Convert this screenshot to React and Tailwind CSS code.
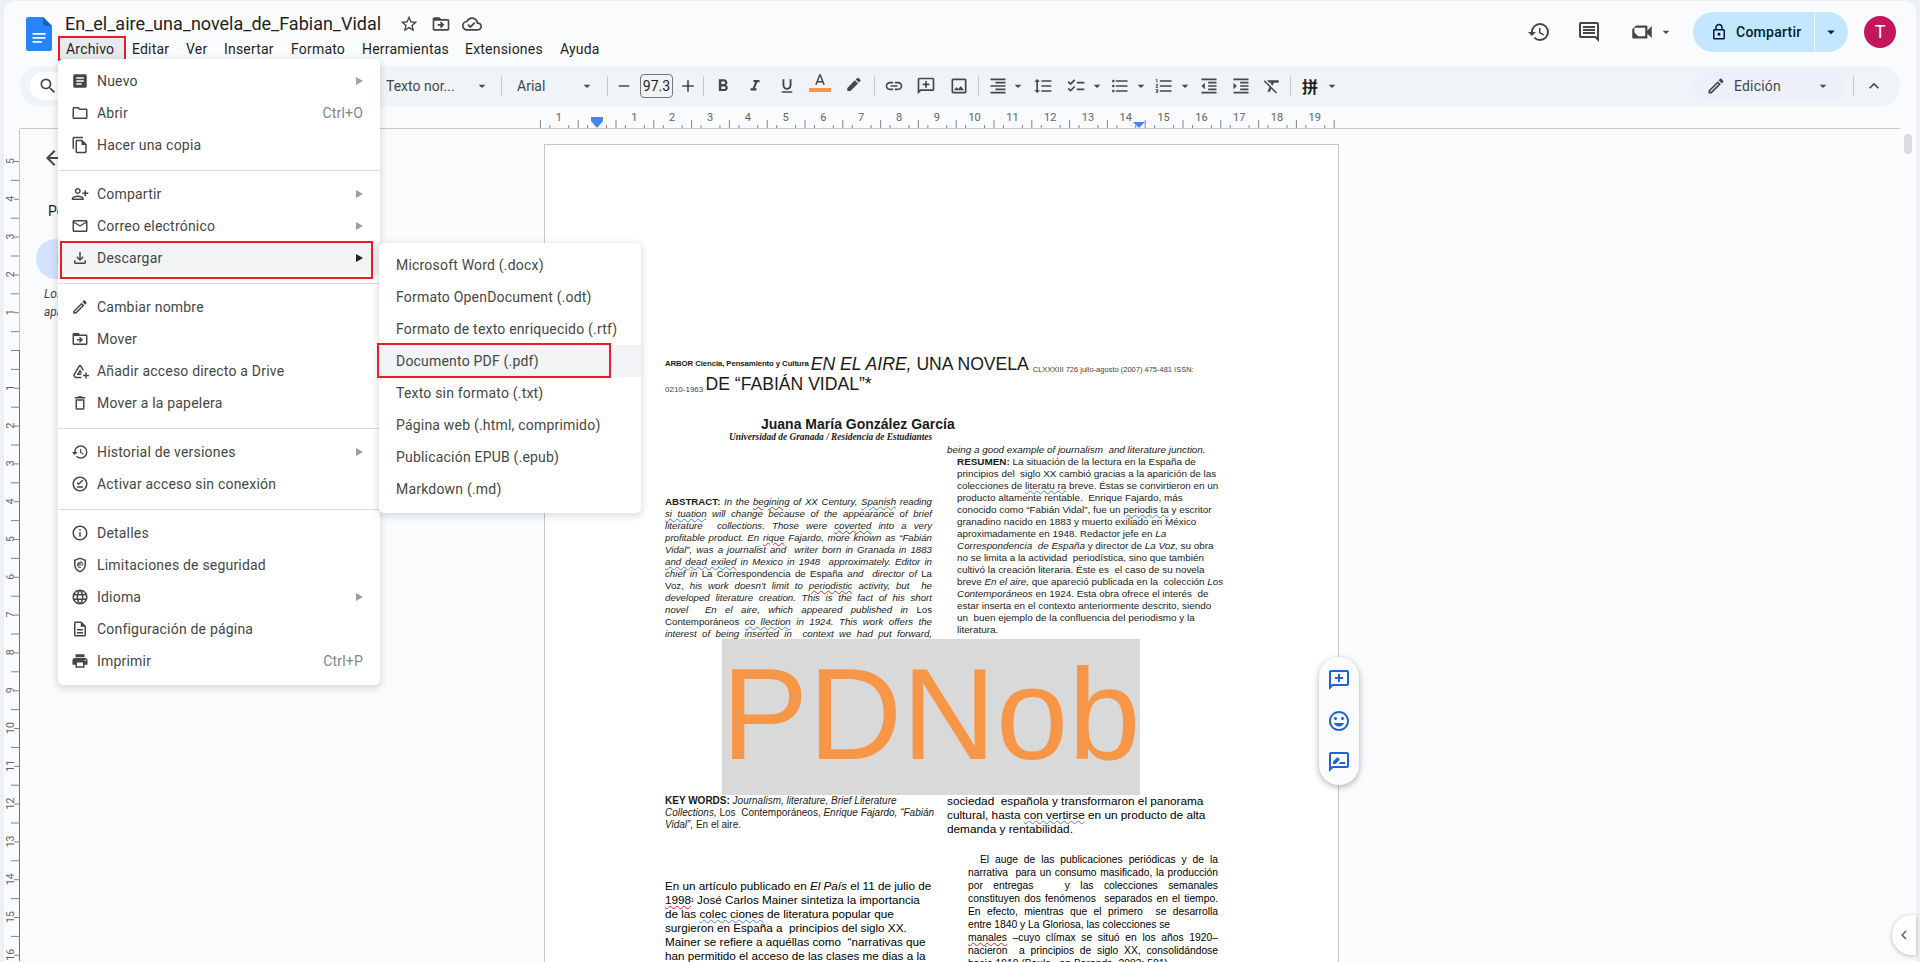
const P = {
  star: "M22 9.24l-7.19-.62L12 2 9.19 8.63 2 9.24l5.46 4.73L5.82 21 12 17.27 18.18 21l-1.63-7.03L22 9.24zM12 15.4l-3.76 2.27 1-4.28-3.32-2.88 4.38-.38L12 6.1l1.71 4.04 4.38.38-3.32 2.88 1 4.28L12 15.4z",
  move: "M20 6h-8l-2-2H4c-1.1 0-2 .9-2 2v12c0 1.1.9 2 2 2h16c1.1 0 2-.9 2-2V8c0-1.1-.9-2-2-2zm0 12H4V8h16v10zm-8.01-9l-1.41 1.41L12.16 12H8v2h4.16l-1.59 1.59L11.99 17 16 13.01 11.99 9z",
  cloud: "M19.35 10.04C18.67 6.59 15.64 4 12 4 9.11 4 6.6 5.64 5.35 8.04 2.34 8.36 0 10.91 0 14c0 3.31 2.69 6 6 6h13c2.76 0 5-2.24 5-5 0-2.64-2.05-4.78-4.65-4.96zM19 18H6c-2.21 0-4-1.79-4-4 0-2.05 1.53-3.76 3.56-3.97l1.07-.11.5-.95C8.08 7.14 9.94 6 12 6c2.62 0 4.88 1.86 5.39 4.43l.3 1.5 1.53.11c1.56.1 2.78 1.41 2.78 2.96 0 1.65-1.35 3-3 3zm-9-3.82l-2.09-2.09L6.5 13.5 10 17l6.01-6.01-1.41-1.41z",
  history: "M13 3a9 9 0 0 0-9 9H1l3.89 3.89.07.14L9 12H6c0-3.87 3.13-7 7-7s7 3.13 7 7-3.13 7-7 7c-1.93 0-3.68-.79-4.94-2.06l-1.42 1.42A8.954 8.954 0 0 0 13 21a9 9 0 0 0 0-18zm-1 5v5l4.28 2.54.72-1.21-3.5-2.08V8H12z",
  comment: "M21.99 4c0-1.1-.89-2-1.99-2H4c-1.1 0-2 .9-2 2v12c0 1.1.9 2 2 2h14l4 4-.01-18zM20 4v13.17L18.83 16H4V4h16zM6 12h12v2H6zm0-3h12v2H6zm0-3h12v2H6z",
  video: "M15 8v8H8.5L5 12.5V8h10m1-2H6.5L3 9.5V17c0 .55.45 1 1 1h12c.55 0 1-.45 1-1v-3.5l4 4v-11l-4 4V7c0-.55-.45-1-1-1z",
  lock: "M18 8h-1V6c0-2.76-2.24-5-5-5S7 3.24 7 6v2H6c-1.1 0-2 .9-2 2v10c0 1.1.9 2 2 2h12c1.1 0 2-.9 2-2V10c0-1.1-.9-2-2-2zM9 6c0-1.66 1.34-3 3-3s3 1.34 3 3v2H9V6zm9 14H6V10h12v10zm-6-3c1.1 0 2-.9 2-2s-.9-2-2-2-2 .9-2 2 .9 2 2 2z",
  edit: "M14.06 9.02l.92.92L5.92 19H5v-.92l9.06-9.06M17.66 3c-.25 0-.51.1-.7.29l-1.83 1.83 3.75 3.75 1.83-1.83c.39-.39.39-1.02 0-1.41l-2.34-2.34c-.2-.2-.45-.29-.71-.29zm-3.6 3.19L3 17.25V21h3.75L17.81 9.94l-3.75-3.75z",
  search: "M15.5 14h-.79l-.28-.27A6.471 6.471 0 0 0 16 9.5 6.5 6.5 0 1 0 9.5 16c1.61 0 3.09-.59 4.23-1.57l.27.28v.79l5 4.99L20.49 19l-4.99-5zm-6 0C7.01 14 5 11.99 5 9.5S7.01 5 9.5 5 14 7.01 14 9.5 11.99 14 9.5 14z",
  article: "M19 3H5c-1.1 0-2 .9-2 2v14c0 1.1.9 2 2 2h14c1.1 0 2-.9 2-2V5c0-1.1-.9-2-2-2zm-5 14H7v-2h7v2zm3-4H7v-2h10v2zm0-4H7V7h10v2z",
  folder: "M9.17 6l2 2H20v10H4V6h5.17M10 4H4c-1.1 0-1.99.9-1.99 2L2 18c0 1.1.9 2 2 2h16c1.1 0 2-.9 2-2V8c0-1.1-.9-2-2-2h-8l-2-2z",
  copy: "M16 1H4c-1.1 0-2 .9-2 2v14h2V3h12V1zm-1 4H8c-1.1 0-1.99.9-1.99 2L6 21c0 1.1.89 2 1.99 2H19c1.1 0 2-.9 2-2V11l-6-6zM8 21V7h6v5h5v9H8z",
  person: "M15 12c2.21 0 4-1.79 4-4s-1.79-4-4-4-4 1.79-4 4 1.79 4 4 4zm0-6c1.1 0 2 .9 2 2s-.9 2-2 2-2-.9-2-2 .9-2 2-2zm0 8c-2.67 0-8 1.34-8 4v2h16v-2c0-2.66-5.33-4-8-4zm-6 4c.22-.72 3.31-2 6-2 2.7 0 5.8 1.29 6 2H9zm-3-3v-3h3v-2H6V7H4v3H1v2h3v3h2z",
  mail: "M22 6c0-1.1-.9-2-2-2H4c-1.1 0-2 .9-2 2v12c0 1.1.9 2 2 2h16c1.1 0 2-.9 2-2V6zm-2 0l-8 5-8-5h16zm0 12H4V8l8 5 8-5v10z",
  download: "M18 15v3H6v-3H4v3c0 1.1.9 2 2 2h12c1.1 0 2-.9 2-2v-3h-2zm-1-4l-1.41-1.41L13 12.17V4h-2v8.17L8.41 9.59 7 11l5 5 5-5z",
  trash: "M16 9v10H8V9h8m-1.5-6h-5l-1 1H5v2h14V4h-3.5l-1-1zM18 7H6v12c0 1.1.9 2 2 2h8c1.1 0 2-.9 2-2V7z",
  info: "M11 7h2v2h-2zm0 4h2v6h-2zm1-9C6.48 2 2 6.48 2 12s4.48 10 10 10 10-4.48 10-10S17.52 2 12 2zm0 18c-4.41 0-8-3.59-8-8s3.59-8 8-8 8 3.59 8 8-3.59 8-8 8z",
  globe: "M11.99 2C6.47 2 2 6.48 2 12s4.47 10 9.99 10C17.52 22 22 17.52 22 12S17.52 2 11.99 2zm6.93 6h-2.95a15.65 15.65 0 0 0-1.38-3.56A8.03 8.03 0 0 1 18.92 8zM12 4.04c.83 1.2 1.48 2.53 1.91 3.96h-3.82c.43-1.43 1.08-2.76 1.91-3.96zM4.26 14C4.1 13.36 4 12.69 4 12s.1-1.36.26-2h3.38c-.08.66-.14 1.32-.14 2s.06 1.34.14 2H4.26zm.82 2h2.95c.32 1.25.78 2.45 1.38 3.56A7.987 7.987 0 0 1 5.08 16zm2.95-8H5.08a7.987 7.987 0 0 1 4.33-3.56A15.65 15.65 0 0 0 8.03 8zM12 19.96c-.83-1.2-1.48-2.53-1.91-3.96h3.82c-.43 1.43-1.08 2.76-1.91 3.96zM14.34 14H9.66c-.09-.66-.16-1.32-.16-2s.07-1.35.16-2h4.68c.09.65.16 1.32.16 2s-.07 1.34-.16 2zm.25 5.56c.6-1.11 1.06-2.31 1.38-3.56h2.95a8.03 8.03 0 0 1-4.33 3.56zM16.36 14c.08-.66.14-1.32.14-2s-.06-1.34-.14-2h3.38c.16.64.26 1.31.26 2s-.1 1.36-.26 2h-3.38z",
  page: "M8 16h8v2H8zm0-4h8v2H8zm6-10H6c-1.1 0-2 .9-2 2v16c0 1.1.89 2 1.99 2H18c1.1 0 2-.9 2-2V8l-6-6zm4 18H6V4h7v5h5v11z",
  print: "M19 8H5c-1.66 0-3 1.34-3 3v6h4v4h12v-4h4v-6c0-1.66-1.34-3-3-3zm-3 11H8v-5h8v5zm3-7c-.55 0-1-.45-1-1s.45-1 1-1 1 .45 1 1-.45 1-1 1zm-1-9H6v4h12V3z",
  drive: "M12 3.5c-.7 0-1.3.4-1.7 1L3.2 16.6c-.4.6-.4 1.4 0 2l1.3 2.2c.3.6 1 1 1.7 1H14v-2H6.2l-1.3-2.2L12 5.5l3.6 6.2 1.7-1-3.6-6.2c-.4-.6-1-1-1.7-1zm0 6l-4.5 7.7h6.5v-2H11l1-1.8 1 1.7 1.7-1zM19 14v3h-3v2h3v3h2v-3h3v-2h-3v-3z",
  offline: "M12 2C6.48 2 2 6.48 2 12s4.48 10 10 10 10-4.48 10-10S17.52 2 12 2zm0 18c-4.41 0-8-3.59-8-8s3.59-8 8-8 8 3.59 8 8-3.59 8-8 8zm-4-3h8v-2H8zm2.3-3.3L7.4 10.8l1.4-1.4 1.5 1.5 4.9-4.9 1.4 1.4z",
  shield: "M12 2L4 5v6.1c0 5 3.4 9.7 8 10.9 4.6-1.2 8-5.9 8-10.9V5zm6 9.1c0 4-2.6 7.8-6 8.9-3.4-1.1-6-4.9-6-8.9V6.3l6-2.2 6 2.2zM12 7.5c-2.3 0-4 1.9-4 4.3s1.8 4.2 4.2 4.2h1.3v-1.2h-1.3c-1.7 0-3-1.3-3-3s1.2-3.1 2.8-3.1 2.8 1.2 2.8 2.7v.5c0 .4-.3.8-.7.8s-.6-.4-.6-.8v-.5c0-1.1-.9-2-2-2s-2 .9-2 2 .9 2 2 2c.5 0 1-.2 1.4-.6.3.4.8.6 1.2.6 1.1 0 1.9-.9 1.9-2v-.5c0-2.2-1.8-3.9-4-3.9zm0 5c-.5 0-.9-.4-.9-.8s.4-.9.9-.9.8.4.8.9-.3.8-.8.8z",
  bold: "M15.6 10.79c.97-.67 1.65-1.77 1.65-2.79 0-2.26-1.75-4-4-4H7v14h7.04c2.09 0 3.71-1.7 3.71-3.79 0-1.52-.86-2.82-2.15-3.42zM10 6.5h3c.83 0 1.5.67 1.5 1.5s-.67 1.5-1.5 1.5h-3v-3zm3.5 9H10v-3h3.5c.83 0 1.5.67 1.5 1.5s-.67 1.5-1.5 1.5z",
  italic: "M10 4v3h2.21l-3.42 8H6v3h8v-3h-2.21l3.42-8H18V4z",
  underline: "M12 17c3.31 0 6-2.69 6-6V3h-2.5v8c0 1.93-1.57 3.5-3.5 3.5S8.5 12.93 8.5 11V3H6v8c0 3.31 2.69 6 6 6zm-7 2v2h14v-2H5z",
  letterA: "M11 3L5.5 17h2.25l1.12-3h6.25l1.12 3h2.25L13 3h-2zm-1.38 9L12 5.67 14.38 12H9.62z",
  marker: "M13.06 5.19l3.75 3.75L7.75 18H4v-3.75l9.06-9.06zm4.82 2.68l-3.75-3.75 1.83-1.83c.39-.39 1.02-.39 1.41 0l2.34 2.34c.39.39.39 1.02 0 1.41l-1.83 1.83z",
  link: "M3.9 12c0-1.71 1.39-3.1 3.1-3.1h4V7H7c-2.76 0-5 2.24-5 5s2.24 5 5 5h4v-1.9H7c-1.71 0-3.1-1.39-3.1-3.1zM8 13h8v-2H8v2zm9-6h-4v1.9h4c1.71 0 3.1 1.39 3.1 3.1s-1.39 3.1-3.1 3.1h-4V17h4c2.76 0 5-2.24 5-5s-2.24-5-5-5z",
  addComment: "M22 4c0-1.1-.9-2-2-2H4c-1.1 0-2 .9-2 2v12c0 1.1.9 2 2 2h14l4 4V4zm-2 0v13.17L18.83 16H4V4h16zM13 6h-2v3H8v2h3v3h2v-3h3V9h-3z",
  image: "M19 5v14H5V5h14m0-2H5c-1.1 0-2 .9-2 2v14c0 1.1.9 2 2 2h14c1.1 0 2-.9 2-2V5c0-1.1-.9-2-2-2zm-4.86 8.86l-3 3.87L9 13.14 6 17h12l-3.86-5.14z",
  align: "M3 21h18v-2H3v2zm6-4h12v-2H9v2zm-6-4h18v-2H3v2zm6-4h12V7H9v2zM3 3v2h18V3H3z",
  spacing: "M6 7h2.5L5 3.5 1.5 7H4v10H1.5L5 20.5 8.5 17H6V7zm4-2v2h12V5H10zm0 14h12v-2H10v2zm0-6h12v-2H10v2z",
  checklist: "M22 7h-9v2h9V7zm0 8h-9v2h9v-2zM5.54 11L2 7.46l1.41-1.41 2.12 2.12 4.24-4.24 1.41 1.41L5.54 11zm0 8L2 15.46l1.41-1.41 2.12 2.12 4.24-4.24 1.41 1.41L5.54 19z",
  bullets: "M4 10.5c-.83 0-1.5.67-1.5 1.5s.67 1.5 1.5 1.5 1.5-.67 1.5-1.5-.67-1.5-1.5-1.5zm0-6c-.83 0-1.5.67-1.5 1.5S3.17 7.5 4 7.5 5.5 6.83 5.5 6 4.83 4.5 4 4.5zm0 12c-.83 0-1.5.68-1.5 1.5s.68 1.5 1.5 1.5 1.5-.68 1.5-1.5-.67-1.5-1.5-1.5zM7 19h14v-2H7v2zm0-6h14v-2H7v2zm0-8v2h14V5H7z",
  numbers: "M2 17h2v.5H3v1h1v.5H2v1h3v-4H2v1zm1-9h1V4H2v1h1v3zm-1 3h1.8L2 13.1v.9h3v-1H3.2L5 10.9V10H2v1zm5-6v2h14V5H7zm0 14h14v-2H7v2zm0-6h14v-2H7v2z",
  outdent: "M11 17h10v-2H11v2zm-8-5l4 4V8l-4 4zm0 9h18v-2H3v2zM3 3v2h18V3H3zm8 6h10V7H11v2zm0 4h10v-2H11v2z",
  indent: "M3 21h18v-2H3v2zM3 8v8l4-4-4-4zm8 9h10v-2H11v2zM3 3v2h18V3H3zm8 6h10V7H11v2zm0 4h10v-2H11v2z",
  clear: "M3.27 5L2 6.27l6.97 6.97L6.5 19h3l1.57-3.66L16.73 21 18 19.73 3.55 5.27 3.27 5zM6 5v.18L8.82 8h2.4l-.72 1.68 2.1 2.1L14.21 8H20V5H6z",
  mood: "M11.99 2C6.47 2 2 6.48 2 12s4.47 10 9.99 10C17.52 22 22 17.52 22 12S17.52 2 11.99 2zM12 20c-4.42 0-8-3.58-8-8s3.58-8 8-8 8 3.58 8 8-3.58 8-8 8zm3.5-9c.83 0 1.5-.67 1.5-1.5S16.33 8 15.5 8 14 8.67 14 9.5s.67 1.5 1.5 1.5zm-7 0c.83 0 1.5-.67 1.5-1.5S9.33 8 8.5 8 7 8.67 7 9.5 7.67 11 8.5 11zm3.5 6.5c2.33 0 4.31-1.46 5.11-3.5H6.89c.8 2.04 2.78 3.5 5.11 3.5z",
  suggest: "M20 2H4c-1.1 0-2 .9-2 2v18l4-4h14c1.1 0 2-.9 2-2V4c0-1.1-.9-2-2-2zm0 14H5.17L4 17.17V4h16v12zM11.5 14H18v-2h-4.5zM6 14h2.5l4.06-4.06a.5.5 0 0 0 0-.71L10.77 7.44a.5.5 0 0 0-.71 0L6 11.5z",
  back: "M20 11H7.83l5.59-5.59L12 4l-8 8 8 8 1.41-1.41L7.83 13H20v-2z",
  caret: "M7 10l5 5 5-5z",
  chevUp: "M7.41 15.41L12 10.83l4.59 4.58L18 14l-6-6-6 6z",
  chevLeft: "M15.41 7.41L14 6l-6 6 6 6 1.41-1.41L10.83 12z",
};

const Icon = ({ d, size = 20, className = "text-[#444746]" }) => (
  <svg width={size} height={size} viewBox="0 0 24 24" fill="currentColor" className={`shrink-0 ${className}`}>
    <path d={d} />
  </svg>
);

const Caret = ({ className = "" }) => <Icon d={P.caret} size={16} className={`text-[#444746] ${className}`} />;

const Sep = ({ className = "" }) => <div className={`w-px h-5 bg-[#c7c7c7] shrink-0 ${className}`} />;

// botón de la barra: ancho fijo con el icono centrado
const Tool = ({ d, w = "w-8", size = 20, flip = false, className = "" }) => (
  <div className={`${w} h-7 flex items-center justify-center shrink-0 ${className}`}>
    <Icon d={d} size={size} className={flip ? "text-[#444746] -scale-x-100" : "text-[#444746]"} />
  </div>
);

const Toolbar = () => (
  <div className="mx-4 h-10 rounded-full bg-[#f0f4f9] flex items-center font-[Roboto,sans-serif] text-sm text-[#444746]">
    <div className="ml-[10px] w-[220px] h-7 bg-white rounded-full flex items-center pl-2">
      <Icon d={P.search} size={20} />
    </div>
    <span className="ml-[136px] w-[88px] shrink-0 whitespace-nowrap">Texto nor...</span>
    <Caret />
    <Sep className="ml-[11px]" />
    <span className="ml-[15px] w-[62px] shrink-0">Arial</span>
    <Caret />
    <Sep className="ml-[12px]" />
    <Tool d="M19 13H5v-2h14v2z" w="w-[32px]" size={18} />
    <div className="w-[33px] h-6 rounded-[4px] border border-[#747775] flex items-center justify-center text-[14px] text-[#1f1f1f] shrink-0">97.3</div>
    <Tool d="M19 13h-6v6h-2v-6H5v-2h6V5h2v6h6v2z" w="w-[30px]" />
    <Sep />
    <Tool d={P.bold} className="ml-[3px]" />
    <Tool d={P.italic} size={18} />
    <Tool d={P.underline} size={18} />
    <div className="w-8 h-7 ml-px flex flex-col items-center justify-start shrink-0">
      <Icon d={P.letterA} size={18} className="text-[#444746] -mb-[1px]" />
      <div className="w-[22px] h-[4px] bg-[#f79646] -mt-[1px]" />
    </div>
    <Tool d={P.marker} size={20} className="ml-[2px]" />
    <Sep className="ml-[4px]" />
    <Tool d={P.link} className="ml-[3px]" />
    <Tool d={P.addComment} flip />
    <Tool d={P.image} className="ml-px" />
    <Sep className="ml-[3px]" />
    <Tool d={P.align} w="w-[28px]" className="ml-[5px]" />
    <Caret className="-ml-[2px]" />
    <Tool d={P.spacing} w="w-[28px]" className="ml-[3px]" />
    <Tool d={P.checklist} w="w-[28px]" className="ml-[5px]" />
    <Caret className="-ml-[1px]" />
    <Tool d={P.bullets} w="w-[28px]" className="ml-[1px]" />
    <Caret className="-ml-[1px]" />
    <Tool d={P.numbers} w="w-[28px]" className="ml-[1px]" />
    <Caret className="-ml-[1px]" />
    <Tool d={P.outdent} w="w-[28px]" className="ml-[2px]" />
    <Tool d={P.indent} w="w-[28px]" className="ml-[4px]" />
    <Tool d={P.clear} w="w-[28px]" className="ml-[3px]" />
    <Sep className="ml-[4px]" />
    <span className="ml-[11px] w-[20px] text-[16px] font-bold text-[#1f1f1f] font-['Noto_Sans_CJK_SC',sans-serif]">拼</span>
    <Caret className="ml-[2px]" />
    <div className="ml-[353px] w-[151px] h-7 rounded-full bg-[#edf0fb] flex items-center pl-[13px] shrink-0">
      <Icon d={P.edit} size={20} />
      <span className="ml-[8px] w-[81px] tracking-[0.2px]">Edición</span>
      <Caret />
    </div>
    <Sep className="ml-[9px]" />
    <Tool d={P.chevUp} w="w-[40px]" />
  </div>
);

const HRuler = () => {
  const ticks = [];
  for (let k = -6; k <= 78; k++) {
    const x = 596.6 + k * 9.45;
    if (k % 4 === 0) {
      if (k !== 0) ticks.push(<text key={k} x={x} y={15} textAnchor="middle" fontSize="11" fill="#5f6368" fontFamily="Roboto, sans-serif">{Math.abs(k / 4)}</text>);
    } else {
      const h = k % 2 === 0 ? 8 : 3;
      ticks.push(<rect key={k} x={x} y={22 - h} width="1" height={h} fill="#80868b" />);
    }
  }
  return (
    <div className="h-[23px] relative shrink-0">
      <svg width="1912" height="23" viewBox="4 0 1912 23" className="block">
        {ticks}
        <rect x="20" y="22" width="1880" height="1.5" fill="#c7c7c7" />
        <path d="M591 11h12v4h-12zM591 15h12l-6 7z" fill="#4285f4" />
        <path d="M1133 16h12l-6 6z" fill="#4285f4" />
      </svg>
    </div>
  );
};

const VRuler = () => {
  const marks = [];
  for (let k = -10; k <= 32; k++) {
    const y = 351 - 130 + k * 18.9;
    const numbered = k % 2 === 0 && k !== 0;
    if (numbered) {
      marks.push(<text key={k} x="0" y="0" transform={`translate(13.5 ${y}) rotate(-90)`} textAnchor="middle" fontSize="10.5" fill="#5f6368" fontFamily="Roboto, sans-serif">{Math.abs(k / 2)}</text>);
    }
    marks.push(<rect key={`t${k}`} x={numbered ? 14 : 11} y={y} width={numbered ? 5 : 8} height="1" fill="#80868b" />);
  }
  return (
    <svg width="16" height="832" viewBox="4 0 16 832" className="block shrink-0">
      {marks}
      <rect x="19" y="0" width="1" height="221" fill="#c7c7c7" />
      <rect x="19" y="221" width="1" height="611" fill="#70757a" />
    </svg>
  );
};

const R = ({ children }) => <span className="underline decoration-wavy decoration-[#e02020] decoration-1 underline-offset-1">{children}</span>;
const B = ({ children }) => <span className="underline decoration-wavy decoration-[#4a80e8] decoration-1 underline-offset-1">{children}</span>;

const J = ({ children, className = "h-3" }) => <p className={`${className} text-justify [text-align-last:justify] whitespace-pre-wrap`}>{children}</p>;
const L = ({ children, className = "" }) => <p className={`whitespace-pre ${className}`}>{children}</p>;

const Page = () => (
  <div className="relative w-[795px] h-[900px] shrink-0 bg-white border border-[#c7c7c7] overflow-hidden font-['Liberation_Sans',sans-serif] text-[#1a1a1a]">
    <div className="pt-[208px] pl-[120px]">
      <p className="h-[21px] leading-[21px] whitespace-pre text-[17.6px]">
        <span className="text-[7.8px] font-bold align-[4px] tracking-[-0.1px]">ARBOR Ciencia, Pensamiento y Cultura </span>
        <i>EN EL AIRE,</i> UNA NOVELA <span className="text-[7.5px] text-[#444] align-[-2px]">CLXXXIII 726 julio-agosto (2007) 475-481 ISSN:</span>
      </p>
      <p className="h-[21px] leading-[21px] whitespace-pre text-[17.6px]">
        <span className="text-[8px] text-[#444] align-[-2px]">0210-1963 </span>DE “FABIÁN VIDAL”*
      </p>
      <p className="mt-[22px] ml-[96px] text-[14px] leading-[14px] font-bold whitespace-pre">Juana María González García</p>
      <p className="ml-[64px] text-[9.4px] leading-[12px] font-bold italic whitespace-pre font-['Liberation_Serif',serif]">Universidad de Granada / Residencia de Estudiantes</p>
    </div>
    <div className="flex pl-[120px] mt-px">
      <div className="w-[267px] shrink-0 pt-[52px] text-[9.7px] leading-[12px] italic">
        <J><b className="not-italic">ABSTRACT:</b> In the <R>begining</R> of XX Century, <B>Spanish</B> reading</J>
        <J><B>si tuation</B> will change because of the appearance of brief</J>
        <J>literature  collections. Those were <R>coverted</R> into a very</J>
        <J>profitable product. En <R>rique</R> Fajardo, more known as “Fabián</J>
        <J>Vidal”, was a journalist and  writer born in Granada in 1883</J>
        <J><B>and dead exiled</B> in Mexico in 1948  approximately. Editor in</J>
        <J>chief in <span className="not-italic">La Correspondencia de España</span> and  director of <span className="not-italic">La</span></J>
        <J><span className="not-italic">Voz,</span> his work doesn’t limit to <R>periodistic</R> activity, but  he</J>
        <J>developed literature creation. This is the fact of his short</J>
        <J>novel  En el aire, which appeared published in <span className="not-italic">Los</span></J>
        <J><span className="not-italic">Contemporáneos</span> <B>co llection</B> in 1924. This work offers the</J>
        <J>interest of being inserted <B>in  context</B> we had put forward,</J>
        <div className="mt-[155px] text-[10px] not-italic">
          <L><b>KEY WORDS:</b> <i>Journalism, literature, Brief Literature</i></L>
          <L><i>Collections,</i> Los  Contemporáneos, <i>Enrique Fajardo, “Fabián</i></L>
          <L><i>Vidal”,</i> En el aire.</L>
        </div>
        <div className="mt-[48px] text-[11.7px] leading-[14.1px] not-italic text-black">
          <L>En un artículo publicado en <i>El País</i> el 11 de julio de</L>
          <L><R>1998</R><sup className="text-[5px]">1</sup> José Carlos Mainer sintetiza la importancia</L>
          <L>de las <B>colec ciones</B> de literatura popular que</L>
          <L>surgieron en España a  principios del siglo XX.</L>
          <L>Mainer se refiere a aquéllas como  “narrativas que</L>
          <L>han permitido el acceso de las clases me dias a la</L>
        </div>
      </div>
      <div className="ml-[15px] w-[300px] shrink-0 text-[9.9px] leading-[12px]">
        <L className="italic">being a good example of journalism  and literature junction.</L>
        <div className="ml-[10px]">
          <L><b>RESUMEN:</b> La situación de la lectura en la España de</L>
          <L>principios del  siglo XX cambió gracias a la aparición de las</L>
          <L>colecciones de <B>literatu ra</B> breve. Éstas se convirtieron en un</L>
          <L>producto altamente rentable.  Enrique Fajardo, más</L>
          <L>conocido como “Fabián Vidal”, fue un <B>periodis ta</B> y escritor</L>
          <L>granadino nacido en 1883 y muerto exiliado en México</L>
          <L>aproximadamente en 1948. Redactor jefe en <i>La</i></L>
          <L><i>Correspondencia  de España</i> y director de <i>La Voz,</i> su obra</L>
          <L>no se limita a la actividad  periodística, sino que también</L>
          <L>cultivó la creación literaria. Éste es  el caso de su novela</L>
          <L>breve <i>En el aire,</i> que apareció publicada en la  colección <i>Los</i></L>
          <L><i>Contemporáneos</i> en 1924. Esta obra ofrece el interés  de</L>
          <L>estar inserta en el contexto anteriormente descrito, siendo</L>
          <L>un  buen ejemplo de la confluencia del periodismo y la</L>
          <L>literatura.</L>
        </div>
        <div className="mt-[158px] text-[11.8px] leading-[14.2px] text-black">
          <L>sociedad  española y transformaron el panorama</L>
          <L>cultural, hasta <B>con vertirse</B> en un producto de alta</L>
          <L>demanda y rentabilidad.</L>
        </div>
        <div className="mt-[16px] ml-[21px] w-[250px] text-[10.3px] leading-[13px] text-black">
          <J className="h-[13px]">  El auge de las publicaciones periódicas y de la</J>
          <J className="h-[13px]">narrativa  para un consumo masificado, la producción</J>
          <J className="h-[13px]">por entregas   y las colecciones semanales</J>
          <J className="h-[13px]">constituyen dos fenómenos  separados en el tiempo.</J>
          <J className="h-[13px]">En efecto, mientras que el primero  se desarrolla</J>
          <L className="h-[13px]">entre 1840 y La Gloriosa, las colecciones se</L>
          <J className="h-[13px]"><R>manales</R> –cuyo clímax se situó en los años 1920–</J>
          <J className="h-[13px]">nacieron  a principios de siglo XX, consolidándose</J>
          <L>hacia 1910 (Baulo,  en Baranda, 2003: 581).</L>
        </div>
      </div>
    </div>
    {/* marca de agua sobre el documento */}
    <div className="absolute left-[177px] top-[494px] w-[418px] h-[156px] bg-[#d9d9d9] flex items-center justify-center">
      <span className="text-[130px] leading-[156px] text-[#f79646] -mt-[6px]">PDNob</span>
    </div>
  </div>
);

const Sidebar = () => (
  <div className="w-[524px] shrink-0 font-[Roboto,sans-serif] text-[#444746]">
    <div className="ml-[22px] mt-[17px] h-6 flex items-center">
      <Icon d={P.back} size={24} className="text-[#444746]" />
    </div>
    <p className="ml-[28px] mt-[31px] text-sm text-[#1f1f1f] whitespace-nowrap">Pestañas del documento</p>
    <div className="ml-[16px] mt-[18px] w-[270px] h-[40px] rounded-full bg-[#d3e3fd] flex items-center pl-[21px] text-sm font-medium text-[#041e49]">Documento</div>
    <p className="ml-[24px] mt-[6px] w-[260px] text-[12px] leading-[18px] italic">Los encabezados que añadas al documento aparecerán aquí.</p>
  </div>
);

const MenuRow = ({ icon, label, shortcut, arrow, active, flip, size = 18 }) => (
  <div className={`h-8 flex items-center pl-[13px] pr-[17px] text-sm tracking-[0.2px] ${active ? "bg-[#f1f3f4]" : ""}`}>
    <Icon d={icon} size={size} className={flip ? "text-[#444746] -scale-x-100" : "text-[#444746]"} />
    <span className="ml-[8px] text-[#444746] whitespace-nowrap">{label}</span>
    {shortcut && <span className="ml-auto text-[#80868b]">{shortcut}</span>}
    {arrow && (
      <svg width="7" height="8" viewBox="0 0 7 8" className={`ml-auto ${active ? "text-[#202124]" : "text-[#9aa0a6]"}`} fill="currentColor">
        <path d="M0 0l7 4-7 4z" />
      </svg>
    )}
  </div>
);

const MenuSep = () => <div className="h-px bg-[#dadce0] mt-[9px] mb-[7px]" />;

const FileMenu = () => (
  <div className="absolute left-[58px] top-[59px] w-[322px] h-[626px] pt-[6px] bg-white rounded-[5px] shadow-[0_2px_6px_2px_rgba(60,64,67,0.15)] font-[Roboto,sans-serif] z-20">
    <MenuRow icon={P.article} label="Nuevo" arrow />
    <MenuRow icon={P.folder} label="Abrir" shortcut="Ctrl+O" />
    <MenuRow icon={P.copy} label="Hacer una copia" />
    <MenuSep />
    <MenuRow icon={P.person} label="Compartir" arrow flip />
    <MenuRow icon={P.mail} label="Correo electrónico" arrow />
    <MenuRow icon={P.download} label="Descargar" arrow active />
    <MenuSep />
    <MenuRow icon={P.edit} label="Cambiar nombre" />
    <MenuRow icon={P.move} label="Mover" />
    <MenuRow icon={P.drive} label="Añadir acceso directo a Drive" />
    <MenuRow icon={P.trash} label="Mover a la papelera" />
    <MenuSep />
    <MenuRow icon={P.history} label="Historial de versiones" arrow />
    <MenuRow icon={P.offline} label="Activar acceso sin conexión" />
    <MenuSep />
    <MenuRow icon={P.info} label="Detalles" />
    <MenuRow icon={P.shield} label="Limitaciones de seguridad" />
    <MenuRow icon={P.globe} label="Idioma" arrow />
    <MenuRow icon={P.page} label="Configuración de página" />
    <MenuRow icon={P.print} label="Imprimir" shortcut="Ctrl+P" />
    <div className="absolute left-[2px] top-[182px] w-[313px] h-[38px] border-2 border-[#ed1c24]" />
  </div>
);

const formats = [
  "Microsoft Word (.docx)",
  "Formato OpenDocument (.odt)",
  "Formato de texto enriquecido (.rtf)",
  "Documento PDF (.pdf)",
  "Texto sin formato (.txt)",
  "Página web (.html, comprimido)",
  "Publicación EPUB (.epub)",
  "Markdown (.md)",
];

const DownloadMenu = () => (
  <div className="absolute left-[379px] top-[243px] w-[262px] h-[270px] py-[6px] bg-white rounded-[5px] shadow-[0_2px_6px_2px_rgba(60,64,67,0.15)] font-[Roboto,sans-serif] text-sm tracking-[0.2px] text-[#444746] z-30">
    {formats.map((f, i) => (
      <div key={f} className={`h-8 flex items-center pl-[17px] whitespace-nowrap ${i === 3 ? "bg-[#f1f3f4]" : ""}`}>{f}</div>
    ))}
    <div className="absolute -left-[2px] top-[100px] w-[234px] h-[35px] border-2 border-[#ed1c24]" />
  </div>
);

const menus = [
  ["Editar", "w-[54px]"],
  ["Ver", "w-[38px]"],
  ["Insertar", "w-[67px]"],
  ["Formato", "w-[71px]"],
  ["Herramientas", "w-[103px]"],
  ["Extensiones", "w-[95px]"],
  ["Ayuda", "w-[60px]"],
];

export default function App() {
  return (
    <div className="w-[1920px] h-[962px] overflow-hidden relative bg-[#edf0f5]">
      <div className="mx-1 mt-px h-[961px] bg-[#f9fbfd] rounded-t-xl flex flex-col overflow-hidden">
        {/* cabecera */}
        <div className="h-[65px] shrink-0 flex font-[Roboto,sans-serif]">
          <svg width="26" height="34" viewBox="0 0 26 34" className="ml-[22px] mt-[16px] shrink-0">
            <path d="M2.5 0H17l9 9v22.5a2.5 2.5 0 0 1-2.5 2.5h-21A2.5 2.5 0 0 1 0 31.5v-29A2.5 2.5 0 0 1 2.5 0z" fill="#2684fc" />
            <path d="M17 0l9 9h-6.5A2.5 2.5 0 0 1 17 6.5z" fill="#1a5fc4" />
            <path d="M6.5 16h13v1.8h-13zM6.5 20h13v1.8h-13zM6.5 24h9.5v1.8h-9.5z" fill="#fff" />
          </svg>
          <div className="ml-[6px] pt-[11px]">
            <div className="h-6 flex items-center pl-[7px]">
              <span className="text-[18px] leading-6 text-[#1f1f1f] whitespace-nowrap">En_el_aire_una_novela_de_Fabian_Vidal</span>
              <Icon d={P.star} size={20} className="ml-[18px] text-[#444746]" />
              <Icon d={P.move} size={20} className="ml-[12px] text-[#444746]" />
              <Icon d={P.cloud} size={20} className="ml-[11px] text-[#444746]" />
            </div>
            <div className="h-[25px] flex items-center text-sm tracking-[0.2px] text-[#1f1f1f]">
              <div className="w-[68px] h-[25px] border-2 border-[#ed1c24] bg-[#e6e9ed] flex items-center pl-[6px]">Archivo</div>
              {menus.map(([m, w]) => (
                <div key={m} className={`${w} pl-[6px] shrink-0`}>{m}</div>
              ))}
            </div>
          </div>
          <div className="ml-auto h-[61px] flex items-center pr-5">
            <Icon d={P.history} size={24} />
            <Icon d={P.comment} size={24} className="ml-[26px] text-[#444746]" />
            <Icon d={P.video} size={26} className="ml-[28px] text-[#444746]" />
            <Caret className="ml-[3px]" />
            <div className="ml-[19px] w-[155px] h-10 flex text-sm font-medium tracking-[0.25px] text-[#001d35]">
              <div className="w-[121px] bg-[#c2e7ff] rounded-l-full flex items-center pl-[17px]">
                <Icon d={P.lock} size={18} className="text-[#001d35]" />
                <span className="ml-[8px]">Compartir</span>
              </div>
              <div className="flex-1 ml-px bg-[#c2e7ff] rounded-r-full flex items-center pl-[7px]">
                <Icon d={P.caret} size={18} className="text-[#001d35]" />
              </div>
            </div>
            <div className="ml-4 w-8 h-8 rounded-full bg-[#c2185b] text-white text-lg flex items-center justify-center">T</div>
          </div>
        </div>
        <Toolbar />
        <HRuler />
        {/* zona de trabajo */}
        <div className="flex flex-1 min-h-0">
          <VRuler />
          <Sidebar />
          <div className="pt-[15px]">
            <Page />
          </div>
        </div>
      </div>

      <FileMenu />
      <DownloadMenu />

      {/* acciones flotantes junto a la página */}
      <div className="absolute left-[1319px] top-[657px] w-10 h-[128px] rounded-full bg-[#f9fbfd] shadow-[0_2px_6px_rgba(60,64,67,0.4)] flex flex-col items-center justify-center gap-[17px] z-10">
        <Icon d={P.addComment} size={24} className="text-[#1f63d6] -scale-x-100" />
        <Icon d={P.mood} size={24} className="text-[#1f63d6]" />
        <Icon d={P.suggest} size={24} className="text-[#1f63d6]" />
      </div>
      <div className="absolute left-[1904px] top-[134px] w-2 h-5 rounded-full bg-[#dadce0]" />
      <div className="absolute left-[1892px] top-[915px] w-6 h-10 rounded-l-full bg-white shadow-[0_1px_4px_rgba(60,64,67,0.35)] flex items-center justify-center">
        <Icon d={P.chevLeft} size={18} className="text-[#5f6368]" />
      </div>
    </div>
  );
}
